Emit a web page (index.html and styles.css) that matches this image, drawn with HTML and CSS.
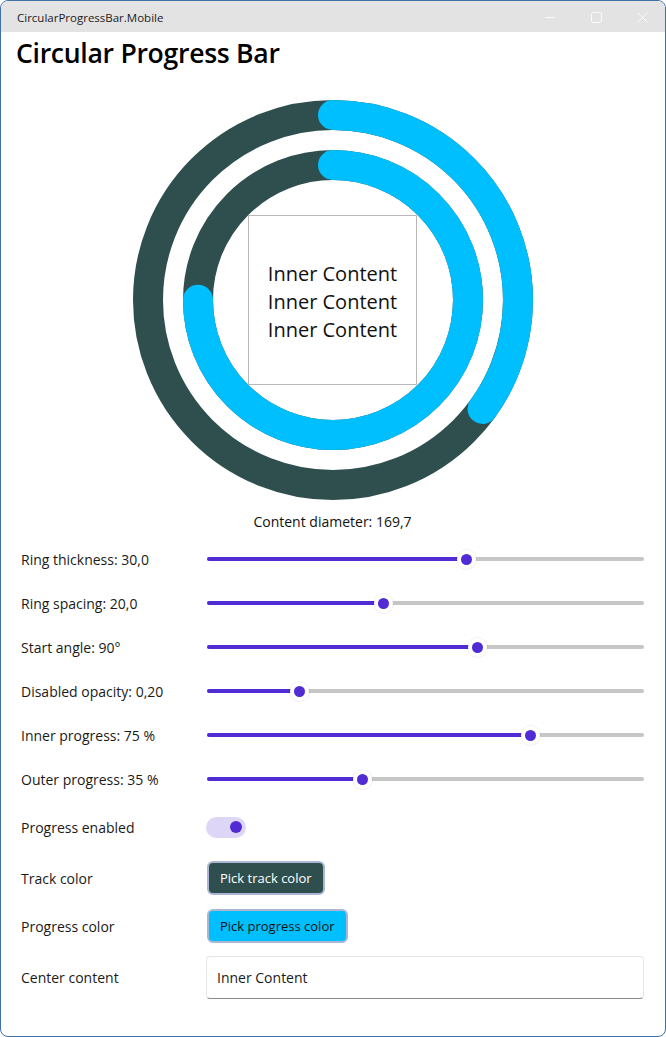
FILE: index.html
```html
<!DOCTYPE html>
<html lang="en">
<head>
<meta charset="utf-8">
<title>CircularProgressBar.Mobile</title>
<link rel="stylesheet" href="styles.css">
</head>
<body>
<div class="window">
  <div class="titlebar">
    <span class="app-title">CircularProgressBar.Mobile</span>
    <div class="caption-buttons">
      <svg class="cap-btn" width="46" height="31" viewBox="0 0 46 31"><line x1="18" y1="16.5" x2="28" y2="16.5" stroke="#fafafa" stroke-width="1"/></svg>
      <svg class="cap-btn" width="46" height="31" viewBox="0 0 46 31"><rect x="18.5" y="11.5" width="10" height="10" rx="1.5" fill="none" stroke="#fafafa" stroke-width="1"/></svg>
      <svg class="cap-btn" width="46" height="31" viewBox="0 0 46 31"><path d="M18.5 11.5 L28.5 21.5 M28.5 11.5 L18.5 21.5" stroke="#fafafa" stroke-width="1"/></svg>
    </div>
  </div>
  <div class="content">
    <h1 class="page-title">Circular Progress Bar</h1>

    <div class="ring-area">
      <div class="ring-wrap">
        <svg class="rings" width="400" height="400" viewBox="0 0 400 400">
          <circle cx="200" cy="200" r="185" fill="none" stroke="#2f4f4f" stroke-width="30"/>
          <circle cx="200" cy="200" r="185" fill="none" stroke="#00bfff" stroke-width="30" stroke-linecap="round" stroke-dasharray="406.84 2000" transform="rotate(-90 200 200)"/>
          <circle cx="200" cy="200" r="135" fill="none" stroke="#2f4f4f" stroke-width="30"/>
          <circle cx="200" cy="200" r="135" fill="none" stroke="#00bfff" stroke-width="30" stroke-linecap="round" stroke-dasharray="636.17 2000" transform="rotate(-90 200 200)"/>
        </svg>
        <div class="center-box">
          <div class="center-text">Inner Content<br>Inner Content<br>Inner Content</div>
        </div>
      </div>
    </div>

    <div class="diameter">Content diameter: 169,7</div>

    <div class="settings">
      <div class="label">Ring thickness: 30,0</div>
      <div class="slider" style="--p:0.598"><div class="track"></div><div class="fill"></div><div class="thumb"></div></div>

      <div class="label">Ring spacing: 20,0</div>
      <div class="slider" style="--p:0.402"><div class="track"></div><div class="fill"></div><div class="thumb"></div></div>

      <div class="label">Start angle: 90°</div>
      <div class="slider" style="--p:0.626"><div class="track"></div><div class="fill"></div><div class="thumb"></div></div>

      <div class="label">Disabled opacity: 0,20</div>
      <div class="slider" style="--p:0.2"><div class="track"></div><div class="fill"></div><div class="thumb"></div></div>

      <div class="label">Inner progress: 75 %</div>
      <div class="slider" style="--p:0.75"><div class="track"></div><div class="fill"></div><div class="thumb"></div></div>

      <div class="label">Outer progress: 35 %</div>
      <div class="slider" style="--p:0.35"><div class="track"></div><div class="fill"></div><div class="thumb"></div></div>

      <div class="label">Progress enabled</div>
      <div class="control"><div class="switch"><div class="switch-knob"></div></div></div>

      <div class="label">Track color</div>
      <div class="control"><button class="btn btn-track">Pick track color</button></div>

      <div class="label">Progress color</div>
      <div class="control"><button class="btn btn-progress">Pick progress color</button></div>

      <div class="label">Center content</div>
      <div class="control"><div class="entry">Inner Content</div></div>
    </div>
  </div>
</div>
</body>
</html>
```

FILE: styles.css
```css
html, body {
  margin: 0;
  padding: 0;
  background: #ffffff;
}

body {
  font-family: "Open Sans", "Noto Sans", sans-serif;
  color: #1a1a1a;
}

.window {
  width: 666px;
  height: 1037px;
  box-sizing: border-box;
  border: 1px solid #3f70a8;
  border-radius: 8px;
  overflow: hidden;
  background: #ffffff;
  display: flex;
  flex-direction: column;
}

.titlebar {
  height: 31px;
  flex: 0 0 31px;
  background: #e3e3e3;
  display: flex;
  align-items: center;
  justify-content: space-between;
  padding-left: 16px;
}

.app-title {
  font-size: 11.5px;
  color: #1c1c1c;
  padding-top: 1px;
}

.caption-buttons {
  display: flex;
  height: 31px;
}

.cap-btn {
  display: block;
}

.content {
  padding: 0 21px 0 20px;
}

.page-title {
  margin: 1px 0 0 -5px;
  font-size: 26.6px;
  font-weight: 600;
  line-height: 40px;
  color: #000000;
  letter-spacing: -0.3px;
}

.ring-area {
  display: flex;
  justify-content: center;
  margin-top: 27px;
}

.ring-wrap {
  position: relative;
  width: 400px;
  height: 400px;
}

.rings {
  display: block;
}

.center-box {
  position: absolute;
  left: 115.15px;
  top: 115.15px;
  width: 169.7px;
  height: 169.7px;
  box-sizing: border-box;
  border: 1.5px solid #b8b8b8;
  display: flex;
  align-items: center;
  justify-content: center;
}

.center-text {
  font-size: 20px;
  line-height: 28px;
  text-align: center;
  color: #111111;
  padding-top: 4px;
}

.diameter {
  text-align: center;
  font-size: 14px;
  line-height: 20px;
  margin-top: 12px;
  color: #111111;
}

.settings {
  display: grid;
  grid-template-columns: 185px 1fr;
  grid-template-rows: 44px repeat(5, 44px) 52px 50px 46px 56px;
  align-items: center;
  margin-top: 5px;
}

.label {
  font-size: 14px;
  color: #1a1a1a;
}

.slider {
  position: relative;
  height: 20px;
  margin-left: 1px;
}

.track {
  position: absolute;
  left: 0;
  right: 0;
  top: 8px;
  height: 4px;
  border-radius: 2px;
  background: #c6c6c6;
}

.fill {
  position: absolute;
  left: 0;
  top: 8px;
  height: 4px;
  border-radius: 2px;
  background: #512bd4;
  width: calc(8px + var(--p) * (100% - 17px));
}

.thumb {
  position: absolute;
  top: 4.5px;
  left: calc(8px + var(--p) * (100% - 17px) - 5.5px);
  width: 11px;
  height: 11px;
  border-radius: 50%;
  background: #512bd4;
  box-shadow: 0 0 0 4px #ffffff, 0 0 0 5px rgba(0, 0, 0, 0.05);
}

.control {
  display: flex;
  align-items: center;
}

.switch {
  width: 40px;
  height: 21px;
  border-radius: 11px;
  background: #ddd6f7;
  position: relative;
}

.switch-knob {
  position: absolute;
  right: 4px;
  top: 4.5px;
  width: 12px;
  height: 12px;
  border-radius: 50%;
  background: #512bd4;
}

.btn {
  font-family: "Open Sans", "Noto Sans", sans-serif;
  font-size: 13px;
  line-height: 18px;
  height: 34px;
  padding: 0 11px;
  margin-left: 1px;
  border: 2px solid #aab6d4;
  border-radius: 6px;
  cursor: pointer;
}

.btn-track {
  background: #2f4f4f;
  color: #ffffff;
}

.btn-progress {
  background: #00bfff;
  color: #111111;
  height: 34px;
}

.entry {
  flex: 1;
  height: 43px;
  box-sizing: border-box;
  border: 1px solid #e6e6e6;
  border-bottom: 1px solid #8a8a8a;
  border-radius: 4px;
  padding: 0 10px;
  display: flex;
  align-items: center;
  font-size: 14px;
  color: #1a1a1a;
}
```
